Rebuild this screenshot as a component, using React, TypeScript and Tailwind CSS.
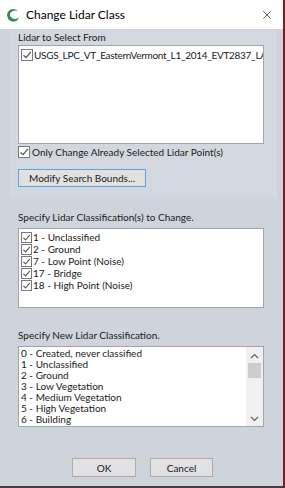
import { X } from 'lucide-react';

const font = { fontFamily: 'Lato, "Noto Sans", sans-serif' };

function Check({ size = 11 }: { size?: number }) {
  return (
    <span
      className="flex items-center justify-center bg-white border border-[#7a7a7a] shrink-0"
      style={{ width: size, height: size }}
    >
      <svg width={size - 2} height={size - 2} viewBox="0 0 10 10">
        <path d="M1.5 5.2 L4 7.6 L8.8 2" fill="none" stroke="#5a5a5a" strokeWidth="1.2" />
      </svg>
    </span>
  );
}

function Logo() {
  return (
    <svg width="14" height="14" viewBox="0 0 14 14">
      <path d="M12 3.5 A6 6 0 1 0 12.5 9.5 A5 4 0 1 1 12 3.5 Z" fill="#2f8f3c" />
      <path d="M12.5 9.5 A6 6 0 0 1 2 10 A5 3.5 0 0 0 12.5 9.5 Z" fill="#1f4f8f" />
    </svg>
  );
}

const changeClasses = [
  '1 - Unclassified',
  '2 - Ground',
  '7 - Low Point (Noise)',
  '17 - Bridge',
  '18 - High Point (Noise)',
];

const newClasses = [
  '0 - Created, never classified',
  '1 - Unclassified',
  '2 - Ground',
  '3 - Low Vegetation',
  '4 - Medium Vegetation',
  '5 - High Vegetation',
  '6 - Building',
  '7 - Low Point (Noise)',
];

export default function App() {
  return (
    <div
      className="w-[285px] h-[488px] flex flex-col bg-[#cfd3db] text-[10px] text-[#1a1a1a] border-r-2 border-r-[#7d1c22] border-b-2 border-b-[#4a3a3e] overflow-hidden"
      style={font}
    >
      {/* Title bar */}
      <div className="h-[29px] bg-white flex items-center pl-[6px] pr-[9px] shrink-0">
        <Logo />
        <span className="ml-[6px] text-[12px] text-black">Change Lidar Class</span>
        <X className="ml-auto w-[14px] h-[14px] text-[#333]" strokeWidth={1.3} />
      </div>

      {/* Group: Lidar to select */}
      <div className="mt-[1px] ml-[10px] mr-[7px] h-[167px] shrink-0 bg-[#d3d7df] border-r border-[#dadde4] pl-[8px] flex flex-col">
        <div className="h-[14px] leading-[14px]">Lidar to Select From</div>
        <div className="mt-[1px] w-[246px] h-[99px] bg-white border border-[#a0a4ab] pt-[3px] pl-[2px] overflow-hidden">
          <div className="flex items-center gap-[1px] whitespace-nowrap leading-[12px]">
            <Check size={12} />
            <span className="tracking-[-0.3px]">USGS_LPC_VT_EasternVermont_L1_2014_EVT2837_LAS</span>
          </div>
        </div>
        <div className="mt-[1px] flex items-center gap-[2px] h-[14px]">
          <Check size={12} />
          <span className="leading-[14px]">Only Change Already Selected Lidar Point(s)</span>
        </div>
        <button className="mt-[10px] w-[128px] h-[18px] bg-[#e1e1e1] border border-[#5ea4dc] flex items-center justify-center leading-[14px]">
          Modify Search Bounds...
        </button>
      </div>

      {/* Classifications to change */}
      <div className="ml-[18px] mt-[13px] h-[14px] leading-[14px]">Specify Lidar Classification(s) to Change.</div>
      <div className="ml-[18px] mt-[4px] w-[246px] h-[80px] shrink-0 bg-white border border-[#a0a4ab] pt-[2px] pl-[2px]">
        {changeClasses.map((c) => (
          <div key={c} className="flex items-center gap-[1px] h-[12px] leading-[12px]">
            <Check size={11} />
            <span>{c}</span>
          </div>
        ))}
      </div>

      {/* New classification */}
      <div className="ml-[18px] mt-[20px] h-[14px] leading-[14px]">Specify New Lidar Classification.</div>
      <div className="ml-[18px] mt-[4px] w-[246px] h-[81px] shrink-0 bg-white border border-[#a0a4ab] flex overflow-hidden">
        <div className="flex-1 pl-[2px] pt-[1px]">
          {newClasses.map((c) => (
            <div key={c} className="h-[11px] leading-[11px] whitespace-nowrap">
              {c}
            </div>
          ))}
        </div>
        <div className="w-[17px] bg-[#f0f0f0] flex flex-col items-center">
          <svg width="9" height="6" viewBox="0 0 9 6" className="mt-[6px]">
            <path d="M1 5 L4.5 1.5 L8 5" fill="none" stroke="#606060" strokeWidth="1.2" />
          </svg>
          <div className="mt-[4px] w-[13px] h-[15px] bg-[#cdcdcd]" />
          <svg width="9" height="6" viewBox="0 0 9 6" className="mt-auto mb-[4px]">
            <path d="M1 1 L4.5 4.5 L8 1" fill="none" stroke="#606060" strokeWidth="1.2" />
          </svg>
        </div>
      </div>

      {/* Buttons */}
      <div className="mt-[31px] ml-[72px] flex gap-[14px]">
        <button className="w-[64px] h-[19px] bg-[#e1e1e1] border border-[#adadad] leading-[14px]">OK</button>
        <button className="w-[63px] h-[19px] bg-[#e1e1e1] border border-[#adadad] leading-[14px]">Cancel</button>
      </div>
    </div>
  );
}
